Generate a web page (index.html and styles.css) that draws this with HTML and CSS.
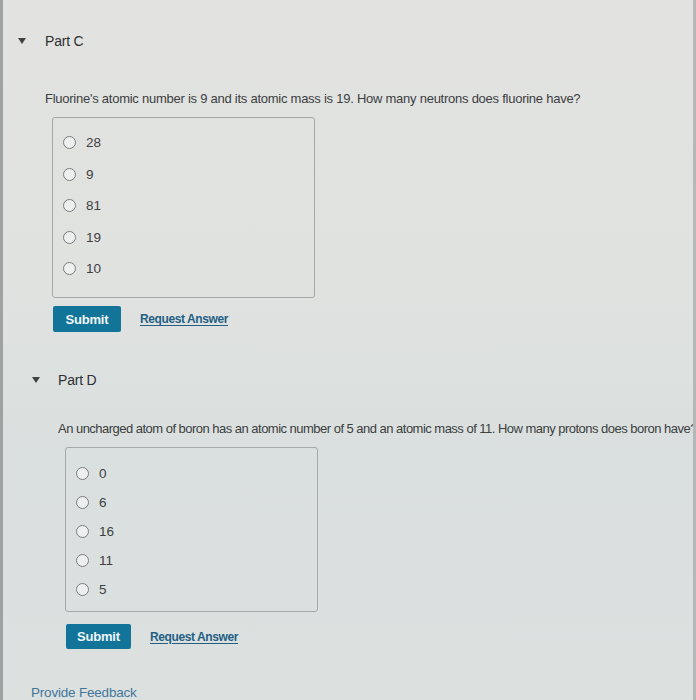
FILE: index.html
```html
<!DOCTYPE html>
<html>
<head>
<meta charset="utf-8">
<link rel="stylesheet" href="styles.css">
</head>
<body>
<div class="page">
  <section class="part part-c">
    <div class="part-head"><span class="caret"></span><span class="part-title">Part C</span></div>
    <p class="question">Fluorine's atomic number is 9 and its atomic mass is 19. How many neutrons does fluorine have?</p>
    <div class="choices">
      <label class="choice"><span class="radio"></span><span class="lbl">28</span></label>
      <label class="choice"><span class="radio"></span><span class="lbl">9</span></label>
      <label class="choice"><span class="radio"></span><span class="lbl">81</span></label>
      <label class="choice"><span class="radio"></span><span class="lbl">19</span></label>
      <label class="choice"><span class="radio"></span><span class="lbl">10</span></label>
    </div>
    <div class="actions">
      <button class="submit">Submit</button>
      <a class="request" href="#">Request Answer</a>
    </div>
  </section>
  <section class="part part-d">
    <div class="part-head"><span class="caret"></span><span class="part-title">Part D</span></div>
    <p class="question">An uncharged atom of boron has an atomic number of 5 and an atomic mass of 11. How many protons does boron have?</p>
    <div class="choices">
      <label class="choice"><span class="radio"></span><span class="lbl">0</span></label>
      <label class="choice"><span class="radio"></span><span class="lbl">6</span></label>
      <label class="choice"><span class="radio"></span><span class="lbl">16</span></label>
      <label class="choice"><span class="radio"></span><span class="lbl">11</span></label>
      <label class="choice"><span class="radio"></span><span class="lbl">5</span></label>
    </div>
    <div class="actions">
      <button class="submit">Submit</button>
      <a class="request" href="#">Request Answer</a>
    </div>
  </section>
  <a class="feedback" href="#">Provide Feedback</a>
</div>
</body>
</html>
```

FILE: styles.css
```css
html, body {
  margin: 0;
  padding: 0;
}
body {
  width: 696px;
  height: 700px;
  overflow: hidden;
  font-family: "Liberation Sans", Arial, sans-serif;
  color: #36383a;
}
.page {
  box-sizing: border-box;
  height: 700px;
  padding-top: 31px;
  border-left: 3px solid #9fa2a2;
  border-right: 3px solid #b4b8b8;
  background: linear-gradient(180deg, #e2e3e1 0%, #e0e2e0 40%, #dae0df 65%, #dce1e0 100%);
  overflow: hidden;
}
.part-head {
  display: flex;
  align-items: center;
  height: 20px;
}
.part-c .part-head { padding-left: 15px; }
.part-d .part-head { padding-left: 29px; margin-top: 38px; }
.caret {
  width: 0;
  height: 0;
  border-left: 4px solid transparent;
  border-right: 4px solid transparent;
  border-top: 6px solid #404244;
  margin-right: 19px;
}
.part-d .caret { margin-right: 18px; }
.part-title {
  font-size: 14px;
  color: #2e3032;
  letter-spacing: -0.2px;
}
.question {
  margin: 0;
  font-size: 13px;
  line-height: 18px;
  white-space: nowrap;
  color: #3c3e40;
}
.part-c .question { margin-top: 39px; padding-left: 42px; letter-spacing: -0.25px; }
.part-d .question { margin-top: 30px; padding-left: 55px; letter-spacing: -0.52px; }
.choices {
  box-sizing: border-box;
  border: 1px solid #a5a8a8;
  border-radius: 3px;
  display: flex;
  flex-direction: column;
}
.part-c .choices {
  margin: 9px 0 0 49px;
  width: 263px;
  height: 181px;
  padding: 9px 0 0 10px;
}
.part-d .choices {
  margin: 9px 0 0 62px;
  width: 253px;
  height: 165px;
  padding: 10.5px 0 0 10px;
}
.choice {
  display: flex;
  align-items: center;
  font-size: 13.5px;
  color: #3e4042;
}
.part-c .choice { height: 31.5px; }
.part-d .choice { height: 29px; }
.radio {
  box-sizing: border-box;
  width: 13px;
  height: 13px;
  border: 1.5px solid #7a7d80;
  border-radius: 50%;
  background: #eef0ef;
  margin-right: 10px;
}
.actions {
  display: flex;
  align-items: center;
  gap: 19px;
}
.part-c .actions { margin: 8px 0 0 50px; }
.part-d .actions { margin: 12px 0 0 63px; }
.submit {
  border: none;
  border-radius: 2px;
  background: #13749a;
  color: #eef6f9;
  font-family: "Liberation Sans", Arial, sans-serif;
  font-weight: bold;
  font-size: 13px;
  letter-spacing: -0.2px;
  padding: 0;
}
.part-c .submit { width: 68px; height: 26px; }
.part-d .submit { width: 65px; height: 25px; }
.request {
  font-size: 12px;
  font-weight: bold;
  letter-spacing: -0.4px;
  color: #235f85;
  text-decoration: underline;
  text-underline-offset: 2px;
}
.feedback {
  display: block;
  margin: 36px 0 0 28px;
  font-size: 13.5px;
  line-height: 16px;
  color: #41769a;
  text-decoration: none;
  letter-spacing: -0.2px;
}
```
